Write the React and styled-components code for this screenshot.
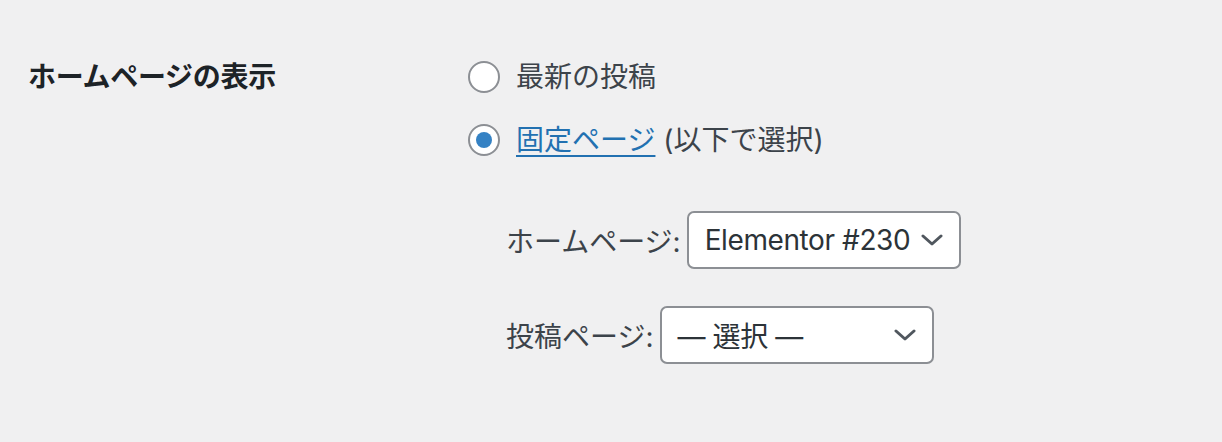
import React from "react";
import styled, { createGlobalStyle } from "styled-components";

const Global = createGlobalStyle`
  html, body { margin: 0; padding: 0; background: #f0f0f1; }
  body {
    font-family: Inter, "Noto Sans CJK JP", sans-serif;
    color: #3c434a;
    font-size: 28px;
  }
`;

const Page = styled.div`
  width: 1222px;
  height: 442px;
  box-sizing: border-box;
  padding: 54px 28px 0 28px;
  background: #f0f0f1;
`;

const Row = styled.div`
  display: grid;
  grid-template-columns: 440px 1fr;
`;

const Heading = styled.div`
  font-weight: 700;
  color: #1d2327;
  font-size: 28px;
  line-height: 46px;
  height: 46px;
  letter-spacing: -0.3px;
`;

const Options = styled.div`
  display: flex;
  flex-direction: column;
  gap: 17px;
`;

const RadioRow = styled.label`
  display: flex;
  align-items: center;
  height: 46px;
  gap: 16px;
  line-height: 46px;
  white-space: nowrap;
`;

const Radio = styled.span`
  box-sizing: border-box;
  width: 32px;
  height: 32px;
  border-radius: 50%;
  border: 2px solid #8c8f94;
  background: #fff;
  display: flex;
  align-items: center;
  justify-content: center;
  flex: none;
  &::after {
    content: "";
    display: ${(p) => (p.checked ? "block" : "none")};
    width: 16px;
    height: 16px;
    border-radius: 50%;
    background: #3582c4;
  }
`;

const Link = styled.a`
  color: #2271b1;
  text-decoration: underline;
  text-underline-offset: 5px;
  text-decoration-thickness: 2px;
`;

const SubList = styled.div`
  display: flex;
  flex-direction: column;
  gap: 37px;
  margin: 48px 0 0 38px;
`;

const SelectRow = styled.div`
  display: flex;
  align-items: center;
  gap: 6px;
  white-space: nowrap;
`;

const Select = styled.div`
  box-sizing: border-box;
  width: 274px;
  height: 58px;
  border: 2px solid #8c8f94;
  border-radius: 7px;
  background: #fff;
  display: flex;
  align-items: center;
  justify-content: space-between;
  padding: 0 16px 0 16px;
  color: #2c3338;
  font-size: 28px;
  letter-spacing: -0.4px;
`;

const Chevron = () => (
  <svg width="22" height="14" viewBox="0 0 22 14" fill="none">
    <path d="M2 3 L11 11 L20 3" stroke="#50575e" strokeWidth="3" strokeLinecap="round" strokeLinejoin="round" />
  </svg>
);

export default function App() {
  return (
    <>
      <Global />
      <Page>
        <Row>
          <Heading>ホームページの表示</Heading>
          <div>
            <Options>
              <RadioRow>
                <Radio />
                <span>最新の投稿</span>
              </RadioRow>
              <RadioRow>
                <Radio checked />
                <span>
                  <Link>固定ページ</Link> (以下で選択)
                </span>
              </RadioRow>
            </Options>
            <SubList>
              <SelectRow>
                <span>ホームページ:</span>
                <Select>
                  <span>Elementor #230</span>
                  <Chevron />
                </Select>
              </SelectRow>
              <SelectRow>
                <span>投稿ページ:</span>
                <Select>
                  <span>— 選択 —</span>
                  <Chevron />
                </Select>
              </SelectRow>
            </SubList>
          </div>
        </Row>
      </Page>
    </>
  );
}
